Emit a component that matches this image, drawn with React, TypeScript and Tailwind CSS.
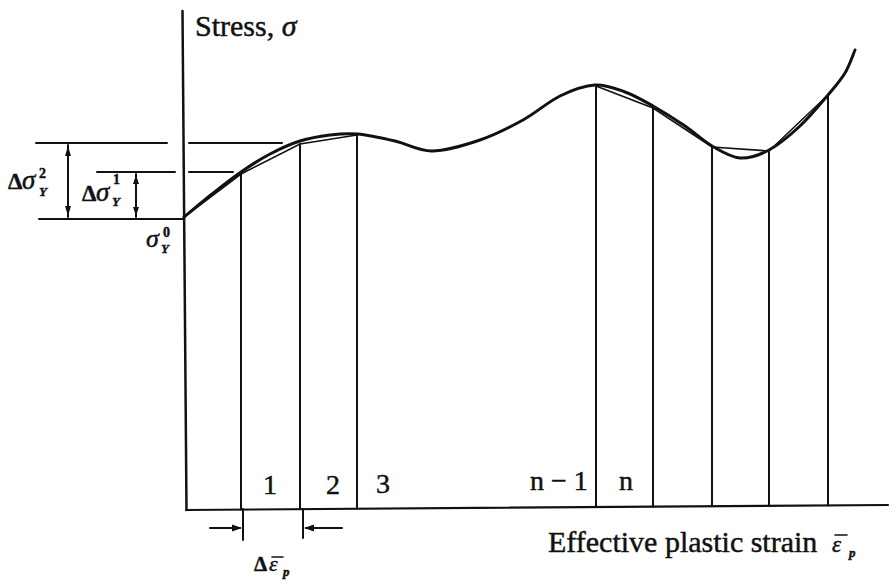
const CURVE: [number, number][] = [
  [184, 217],
  [212, 194],
  [241, 172],
  [270, 154],
  [300, 141],
  [330, 135],
  [357, 134],
  [395, 141],
  [432, 151],
  [480, 140],
  [523, 120],
  [560, 96],
  [595, 85],
  [625, 92],
  [653, 106],
  [685, 126],
  [712, 146],
  [740, 158],
  [769, 150],
  [800, 126],
  [828, 95],
  [845, 73],
  [855, 50],
];

// chord points where the strips meet the curve
const CHORDS: [number, number][][] = [
  [
    [184, 217],
    [241, 174],
    [300, 144],
    [357, 135],
  ],
  [
    [596, 86],
    [653, 108],
    [712, 147],
    [769, 151],
    [828, 95],
  ],
];

const VERTICALS = [241, 300, 357, 596, 653, 712, 769, 828];

function smoothPath(pts: [number, number][]) {
  let d = `M${pts[0][0]},${pts[0][1]}`;
  for (let i = 0; i < pts.length - 1; i++) {
    const p0 = pts[i - 1] || pts[i];
    const p1 = pts[i];
    const p2 = pts[i + 1];
    const p3 = pts[i + 2] || p2;
    const c1x = p1[0] + (p2[0] - p0[0]) / 6;
    const c1y = p1[1] + (p2[1] - p0[1]) / 6;
    const c2x = p2[0] - (p3[0] - p1[0]) / 6;
    const c2y = p2[1] - (p3[1] - p1[1]) / 6;
    d += ` C${c1x},${c1y} ${c2x},${c2y} ${p2[0]},${p2[1]}`;
  }
  return d;
}

const baseY = (x: number) => 510 - ((x - 187) * 5) / 700;

function curveY(x: number) {
  for (const c of CHORDS) for (const p of c) if (p[0] === x) return p[1];
  return 150;
}

export default function App() {
  return (
    <div className="w-[896px] h-[584px] bg-white overflow-hidden">
      <svg
        width="896"
        height="584"
        viewBox="0 0 896 584"
        className="block font-['Liberation_Serif','Times_New_Roman',serif]"
      >
        <g stroke="#111" fill="none" strokeLinecap="round">
          {/* axes */}
          <line x1="182.5" y1="11" x2="186.5" y2="510" strokeWidth="2.5" />
          <line x1="186" y1="510" x2="888" y2="505" strokeWidth="2.2" />

          {/* curve */}
          <path d={smoothPath(CURVE)} strokeWidth="3" />

          {/* chords */}
          {CHORDS.map((c, i) => (
            <polyline key={i} points={c.map((p) => p.join(",")).join(" ")} strokeWidth="1.6" />
          ))}

          {/* strip boundaries */}
          {VERTICALS.map((x) => (
            <line key={x} x1={x} y1={curveY(x)} x2={x} y2={baseY(x)} strokeWidth="2" />
          ))}

          {/* yield stress levels */}
          <line x1="36" y1="143" x2="167" y2="143" strokeWidth="2" />
          <line x1="189" y1="143" x2="282" y2="143" strokeWidth="2" />
          <line x1="97" y1="172" x2="175" y2="172" strokeWidth="2" />
          <line x1="189" y1="172" x2="233" y2="172" strokeWidth="2" />
          <line x1="39" y1="219" x2="183" y2="219" strokeWidth="2" />

          {/* vertical dimension arrows */}
          <line x1="68" y1="145" x2="68" y2="217" strokeWidth="2" />
          <line x1="136" y1="174" x2="136" y2="217" strokeWidth="2" />

          {/* strain increment ticks + arrows */}
          <line x1="243" y1="509" x2="243" y2="540" strokeWidth="2" />
          <line x1="303" y1="509" x2="303" y2="538" strokeWidth="2" />
          <line x1="210" y1="528" x2="240" y2="528" strokeWidth="2" />
          <line x1="306" y1="528" x2="342" y2="528" strokeWidth="2" />

          {/* overbars on epsilon */}
          <line x1="272" y1="557" x2="283" y2="557" strokeWidth="1.6" />
          <line x1="835" y1="535" x2="847" y2="535" strokeWidth="1.6" />
        </g>

        <g fill="#111">
          <polygon points="68,146 65,156 71,156" />
          <polygon points="68,216 65,206 71,206" />
          <polygon points="136,175 133,184 139,184" />
          <polygon points="136,216 133,207 139,207" />
          <polygon points="242,528 232,524.5 232,531.5" />
          <polygon points="304,528 314,524.5 314,531.5" />
        </g>

        <g fill="#111" stroke="#111" strokeWidth="0.45">
          <text x="195" y="36" fontSize="30">
            Stress, <tspan fontStyle="italic">σ</tspan>
          </text>

          {/* Δσ²_Y */}
          <text x="8" y="189" fontSize="23" fontWeight="bold">Δ</text>
          <text x="22" y="189" fontSize="27" fontStyle="italic">σ</text>
          <text x="39" y="178" fontSize="14" fontWeight="bold">2</text>
          <text x="39" y="196" fontSize="13" fontStyle="italic" fontWeight="bold">Y</text>

          {/* Δσ¹_Y */}
          <text x="82" y="201" fontSize="23" fontWeight="bold">Δ</text>
          <text x="96" y="201" fontSize="27" fontStyle="italic">σ</text>
          <text x="113" y="184" fontSize="14" fontWeight="bold">1</text>
          <text x="112" y="206" fontSize="13" fontStyle="italic" fontWeight="bold">Y</text>

          {/* σ⁰_Y */}
          <text x="146" y="247" fontSize="26" fontStyle="italic">σ</text>
          <text x="163" y="237" fontSize="14" fontWeight="bold">0</text>
          <text x="161" y="253" fontSize="13" fontStyle="italic" fontWeight="bold">Y</text>

          {/* strip numbers */}
          <text x="270" y="494" fontSize="28" textAnchor="middle">1</text>
          <text x="333" y="494" fontSize="28" textAnchor="middle">2</text>
          <text x="383" y="493" fontSize="28" textAnchor="middle">3</text>
          <text x="530" y="490" fontSize="28">n − 1</text>
          <text x="619" y="490" fontSize="28">n</text>

          {/* Δε̄_p */}
          <text x="254" y="571" fontSize="21" fontWeight="bold">Δ</text>
          <text x="269" y="571" fontSize="22" fontStyle="italic">ε</text>
          <text x="283" y="576" fontSize="13" fontStyle="italic" fontWeight="bold">p</text>

          <text x="548" y="552" fontSize="30">
            Effective plastic strain
          </text>
          <text x="832" y="552" fontSize="23" fontStyle="italic">ε</text>
          <text x="849" y="557" fontSize="13" fontStyle="italic" fontWeight="bold">p</text>
        </g>
      </svg>
    </div>
  );
}
